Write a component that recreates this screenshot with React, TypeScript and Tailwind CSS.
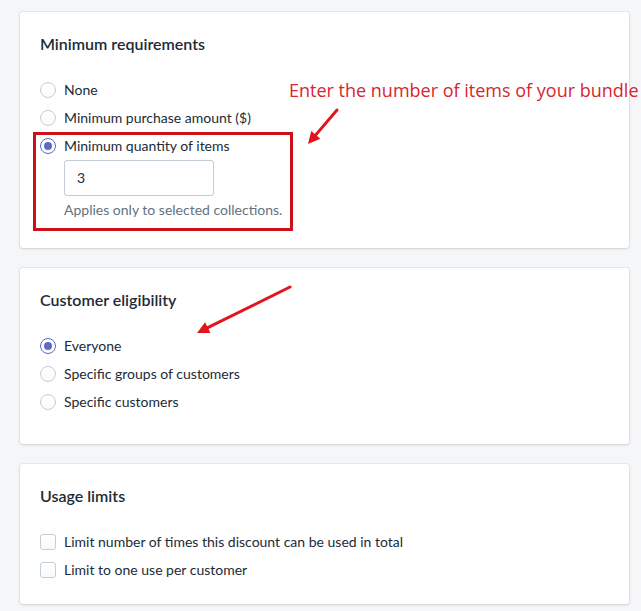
import { ReactNode } from 'react'

const font = { fontFamily: 'Lato, "Open Sans", sans-serif' }

function Card({ title, children, className }: { title: string; children: ReactNode; className?: string }) {
  return (
    <div
      className={`relative rounded-[3px] bg-white px-5 pt-5 shadow-[0_0_0_1px_rgba(63,63,68,0.06),0_1px_3px_rgba(63,63,68,0.15)] ${className ?? 'pb-7'}`}
    >
      <h2 className="text-[16px] leading-6 font-semibold text-[#212b36]">{title}</h2>
      <div className="mt-5">{children}</div>
    </div>
  )
}

function Radio({ label, checked }: { label: string; checked?: boolean }) {
  return (
    <label className="flex h-7 items-center gap-2">
      <span
        className={`flex h-4 w-4 items-center justify-center rounded-full border bg-gradient-to-b from-white to-[#f9fafb] ${
          checked ? 'border-[#5c6ac4]' : 'border-[#c4cdd5]'
        }`}
      >
        {checked && <span className="h-[8px] w-[8px] rounded-full bg-[#5c6ac4]" />}
      </span>
      <span className="text-sm text-[#212b36]">{label}</span>
    </label>
  )
}

function Checkbox({ label }: { label: string }) {
  return (
    <label className="flex h-7 items-center gap-2">
      <span className="h-4 w-4 rounded-[3px] border border-[#c4cdd5] bg-gradient-to-b from-white to-[#f9fafb]" />
      <span className="text-sm text-[#212b36]">{label}</span>
    </label>
  )
}

function Arrow({ x1, y1, x2, y2 }: { x1: number; y1: number; x2: number; y2: number }) {
  const a = Math.atan2(y2 - y1, x2 - x1)
  const len = 12
  const w = 6
  const bx = x2 - len * Math.cos(a)
  const by = y2 - len * Math.sin(a)
  const p1 = `${bx + w * Math.sin(a)},${by - w * Math.cos(a)}`
  const p2 = `${bx - w * Math.sin(a)},${by + w * Math.cos(a)}`
  return (
    <g>
      <line x1={x1} y1={y1} x2={bx} y2={by} stroke="#e3141b" strokeWidth={3} strokeLinecap="round" />
      <polygon points={`${x2},${y2} ${p1} ${p2}`} fill="#e3141b" />
    </g>
  )
}

export default function App() {
  return (
    <div className="relative min-h-[611px] w-[641px] overflow-hidden bg-[#f4f6f8]" style={font}>
      <div className="flex flex-col gap-5 pt-3 pr-3 pb-5 pl-5">
        <Card title="Minimum requirements">
          <Radio label="None" />
          <Radio label="Minimum purchase amount ($)" />
          <Radio label="Minimum quantity of items" checked />
          <div className="pl-6">
            <div className="flex h-9 w-[150px] items-center rounded-[3px] border border-[#c4cdd5] px-3 text-sm text-[#212b36]">
              3
            </div>
            <p className="mt-1 text-sm leading-5 text-[#637381]">Applies only to selected collections.</p>
          </div>
        </Card>

        <Card title="Customer eligibility">
          <Radio label="Everyone" checked />
          <Radio label="Specific groups of customers" />
          <Radio label="Specific customers" />
        </Card>

        <Card title="Usage limits" className="pb-5">
          <Checkbox label="Limit number of times this discount can be used in total" />
          <Checkbox label="Limit to one use per customer" />
        </Card>
      </div>

      {/* annotations */}
      <div className="pointer-events-none absolute top-[132px] left-[33px] h-[99px] w-[260px] border-[3px] border-[#cc1219]" />
      <p
        className="absolute top-[78px] left-[289px] text-[18px] leading-6 whitespace-nowrap text-[#d6262e]"
        style={{ fontFamily: '"Open Sans", sans-serif' }}
      >
        Enter the number of items of your bundle
      </p>
      <svg className="pointer-events-none absolute inset-0" width={641} height={611}>
        <Arrow x1={337} y1={110} x2={308} y2={144} />
        <Arrow x1={290} y1={287} x2={197} y2={333} />
      </svg>
    </div>
  )
}
